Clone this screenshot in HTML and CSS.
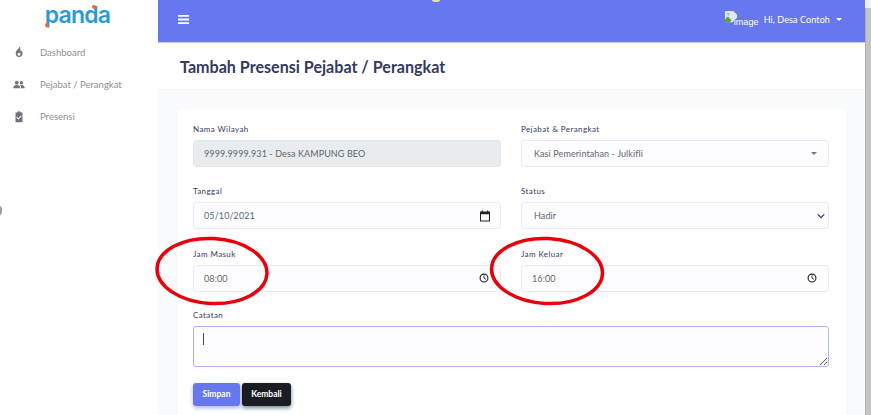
FILE: index.html
```html
<!DOCTYPE html>
<html lang="id">
<head>
<meta charset="utf-8">
<title>Tambah Presensi</title>
<link rel="stylesheet" href="styles.css">
</head>
<body>
<div class="app">
  <aside class="sidebar">
    <div class="brand"><span class="logo">panda<i class="dot dot-a"></i><i class="dot dot-b"></i></span></div>
    <nav class="menu">
      <a class="menu-item"><svg class="menu-icon" viewBox="0 0 12 12"><path d="M6.3.6c.3 2-3.6 3.6-3.6 7a3.4 3.4 0 0 0 6.8 0c0-1.300-.5-2.300-1.100-3-.2.7-.5 1-.9 1.200C7.700 4 7.500 1.800 6.300.6zM6 6.700a1.500 1.500 0 1 1 0 3 1.500 1.500 0 0 1 0-3z" fill-rule="evenodd"/></svg><span>Dashboard</span></a>
      <a class="menu-item"><svg class="menu-icon" viewBox="0 0 12 12"><circle cx="3.800" cy="3.700" r="1.900"/><circle cx="8.400" cy="3.700" r="1.700"/><path d="M.3 9.200c0-2 1.300-3.200 3.500-3.200s3.500 1.200 3.500 3.200zM8.100 9.200c0-1.200-.3-2.300-1.100-3.100.4-.1.800-.1 1.300-.1 2 0 3.400 1.100 3.400 3.200z"/></svg><span>Pejabat / Perangkat</span></a>
      <a class="menu-item"><svg class="menu-icon" viewBox="0 0 12 12"><path fill-rule="evenodd" d="M2.500 1.500h1.700a1.900 1.900 0 0 1 3.600 0h1.700v9.800h-7zM4 5.800 5.400 7.200 8 4.600l.7.700-3.300 3.300L3.300 6.500z"/></svg><span>Presensi</span></a>
    </nav>
  </aside>
  <div class="main">
    <header class="topbar">
      <svg class="burger" viewBox="0 0 11 9"><path d="M0 0h11v1.800H0zM0 3.600h11v1.800H0zM0 7.200h11V9H0z"/></svg>
      <div class="user">
        <span class="avatar"><svg class="broken" viewBox="0 0 16 16"><path d="M1 1h9l4 4v3l-5 5H1z" fill="#dfe6f5"/><path d="M1 10l3-3 4 4-2 2H1z" fill="#5aa03c"/><circle cx="4.500" cy="4.500" r="1.500" fill="#a9c0ec"/></svg><span class="alt">image</span></span>
        <span class="user-name">Hi, Desa Contoh</span>
        <i class="caret"></i>
      </div>
    </header>
    <section class="title-band"><h1>Tambah Presensi Pejabat / Perangkat</h1></section>
    <section class="content">
      <form class="card">
        <div class="row">
          <div class="group"><label>Nama Wilayah</label><div class="control disabled"><span>9999.9999.931 - Desa KAMPUNG BEO</span></div></div>
          <div class="group"><label>Pejabat &amp; Perangkat</label><div class="control"><span class="indent">Kasi Pemerintahan - Julkifli</span><i class="select-arrow"></i></div></div>
        </div>
        <div class="row">
          <div class="group"><label>Tanggal</label><div class="control"><span>05/10/2021</span>
            <svg class="picker" viewBox="0 0 12 12"><path fill-rule="evenodd" d="M1 1.500h1.800V.5h1.200v1h4v-1h1.200v1H11v10H1zM2 4.200v6.300h8V4.200z"/></svg></div></div>
          <div class="group"><label>Status</label><div class="control"><span class="indent">Hadir</span>
            <svg class="chevron" viewBox="0 0 10 6"><path d="M1 1l4 4 4-4" fill="none" stroke="#34395e" stroke-width="1.600"/></svg></div></div>
        </div>
        <div class="row">
          <div class="group"><label>Jam Masuk</label><div class="control"><span>08:00</span>
            <svg class="clock" viewBox="0 0 12 12"><circle cx="6" cy="6" r="4.700" fill="none" stroke="#222" stroke-width="1.300"/><path d="M6 3v3.200l2.200 1.300" fill="none" stroke="#222" stroke-width="1.100"/></svg></div></div>
          <div class="group"><label>Jam Keluar</label><div class="control"><span>16:00</span>
            <svg class="clock" viewBox="0 0 12 12"><circle cx="6" cy="6" r="4.700" fill="none" stroke="#222" stroke-width="1.300"/><path d="M6 3v3.200l2.200 1.300" fill="none" stroke="#222" stroke-width="1.100"/></svg></div></div>
        </div>
        <div class="group notes"><label>Catatan</label><div class="area-wrap"><textarea class="area"></textarea><i class="text-caret"></i></div></div>
        <div class="actions"><button type="button" class="btn primary">Simpan</button><button type="button" class="btn dark">Kembali</button></div>
      </form>
    </section>
  </div>
  <div class="scrollbar"><span class="scroll-up"></span><span class="scroll-thumb"></span></div>
</div>
<svg class="marks" viewBox="0 0 871 415">
  <ellipse cx="212" cy="271" rx="55" ry="32.500" transform="rotate(3 212 271)"/>
  <ellipse cx="547" cy="271" rx="55.500" ry="32.500" transform="rotate(3 547 271)"/>
</svg>
<i class="edge-dot"></i>
<i class="top-dot"></i>
</body>
</html>
```

FILE: styles.css
```css
* { box-sizing: border-box; }
html, body { margin: 0; height: 415px; overflow: hidden; background: #fff; }
body { font-family: "Lato", "Open Sans", sans-serif; position: relative; }
.app { display: flex; width: 871px; height: 415px; }

.sidebar { width: 158px; flex: none; background: #fff; }
.brand { height: 36px; display: flex; justify-content: center; }
.logo { position: relative; font-family: "Inter", sans-serif; font-weight: 600; font-size: 23px; line-height: 30px; color: #2a9ad6; height: 32px; letter-spacing: -.8px; margin-left: -3px; }
.dot { position: absolute; width: 4px; height: 4px; border-radius: 50%; background: #f26a21; }
.dot-a { left: 0; top: 23px; }
.dot-b { right: 14px; top: 5px; }
.menu { display: flex; flex-direction: column; }
.menu-item { height: 32.400px; display: flex; align-items: center; color: #8a9199; font-size: 9.500px; letter-spacing: 0; }
.menu-icon { width: 12px; height: 12px; margin-left: 13px; margin-right: 15px; fill: #6c757d; }

.main { flex: 1; min-width: 0; display: flex; flex-direction: column; background: #f9fafb; }
.topbar { height: 43px; flex: none; background: #6777ef; border-bottom: 1px solid #c9d0f8; display: flex; align-items: center; justify-content: space-between; padding: 0 23px 3px 20px; color: #fff; }
.burger { width: 11px; height: 9px; fill: #fff; }
.user { display: flex; align-items: center; font-size: 9px; font-weight: 400; letter-spacing: .1px; }
.avatar { display: flex; align-items: flex-end; margin-right: 5px; font-family: "Liberation Sans", sans-serif; font-size: 9px; }
.broken { width: 15px; height: 15px; margin-right: -5px; margin-top: -4px; }
.alt { position: relative; top: 2px; }
.caret { width: 0; height: 0; margin-left: 6px; border-left: 3px solid transparent; border-right: 3px solid transparent; border-top: 3px solid #fff; }

.title-band { height: 46px; flex: none; background: #fff; display: flex; align-items: center; padding-left: 22px; box-shadow: 0 1px 3px rgba(0,0,0,.02); }
h1 { margin: 0; font-size: 16.100px; font-weight: 700; color: #34395e; }

.content { padding: 20px 19px 0 20px; flex: 1; min-height: 0; overflow: hidden; }
.card { background: #fff; border-radius: 3px; padding: 15px 17px 0 15px; height: 330px; box-shadow: 0 3px 6px rgba(0,0,0,.015); }
.row { display: grid; grid-template-columns: 308px 308px; column-gap: 20px; margin-bottom: 19.400px; }
.group { display: flex; flex-direction: column; }
label { font-size: 8px; line-height: 10px; margin-bottom: 6px; color: #34395e; font-weight: 400; letter-spacing: .4px; }
.control { height: 27px; display: flex; align-items: center; justify-content: space-between; border: 1px solid #e8e9fb; background: #fdfdff; border-radius: 3px; padding: 0 10px; font-size: 9px; letter-spacing: .1px; color: #60666c; position: relative; }
.control span.indent { padding-left: 2px; }
.disabled { background: #e9ecef; border-color: #e4e6ea; }
.select-arrow { width: 0; height: 0; border-left: 3px solid transparent; border-right: 3px solid transparent; border-top: 3px solid #777; margin-right: 1px; }
.picker { width: 12px; height: 12px; fill: #222; margin-right: -1px; }
.chevron { width: 8px; height: 6px; margin-right: -7px; }
.clock { width: 10px; height: 10px; margin-right: 1px; }

.notes { margin-top: -1.200px; }
.area-wrap { position: relative; height: 41px; }
.area { display: block; width: 100%; height: 41px; border: 1px solid #aab4f6; border-radius: 3px; background: #fdfdff; outline: none; padding: 0; margin: 0; resize: vertical; }
.text-caret { position: absolute; left: 10px; top: 7px; width: 1px; height: 12px; background: #444; }
.actions { display: flex; gap: 2px; margin-top: 16px; }
.btn { height: 23px; border: 0; border-radius: 3px; font-family: inherit; font-size: 8.500px; font-weight: 700; color: #fff; padding: 0; }
.primary { width: 47px; background: #6777ef; box-shadow: 0 2px 4px #acb5f6; }
.dark { width: 49px; background: #191d21; box-shadow: 0 2px 4px #728394; }

.scrollbar { width: 6px; flex: none; display: flex; flex-direction: column; background: #f1f1f1; }
.scroll-up { height: 8px; flex: none; }
.scroll-thumb { flex: 1; background: #c4c4c4; border-left: 1px solid #aeaeae; }

.marks { position: absolute; left: 0; top: 0; width: 871px; height: 415px; pointer-events: none; fill: none; stroke: #e8000b; stroke-width: 3.500px; }
.edge-dot { position: absolute; left: -3px; top: 206px; width: 5px; height: 9px; border-radius: 50%; background: #999; }
.top-dot { position: absolute; left: 432px; top: -2px; width: 8px; height: 4px; border-radius: 50%; background: #e6e0b0; }
```
